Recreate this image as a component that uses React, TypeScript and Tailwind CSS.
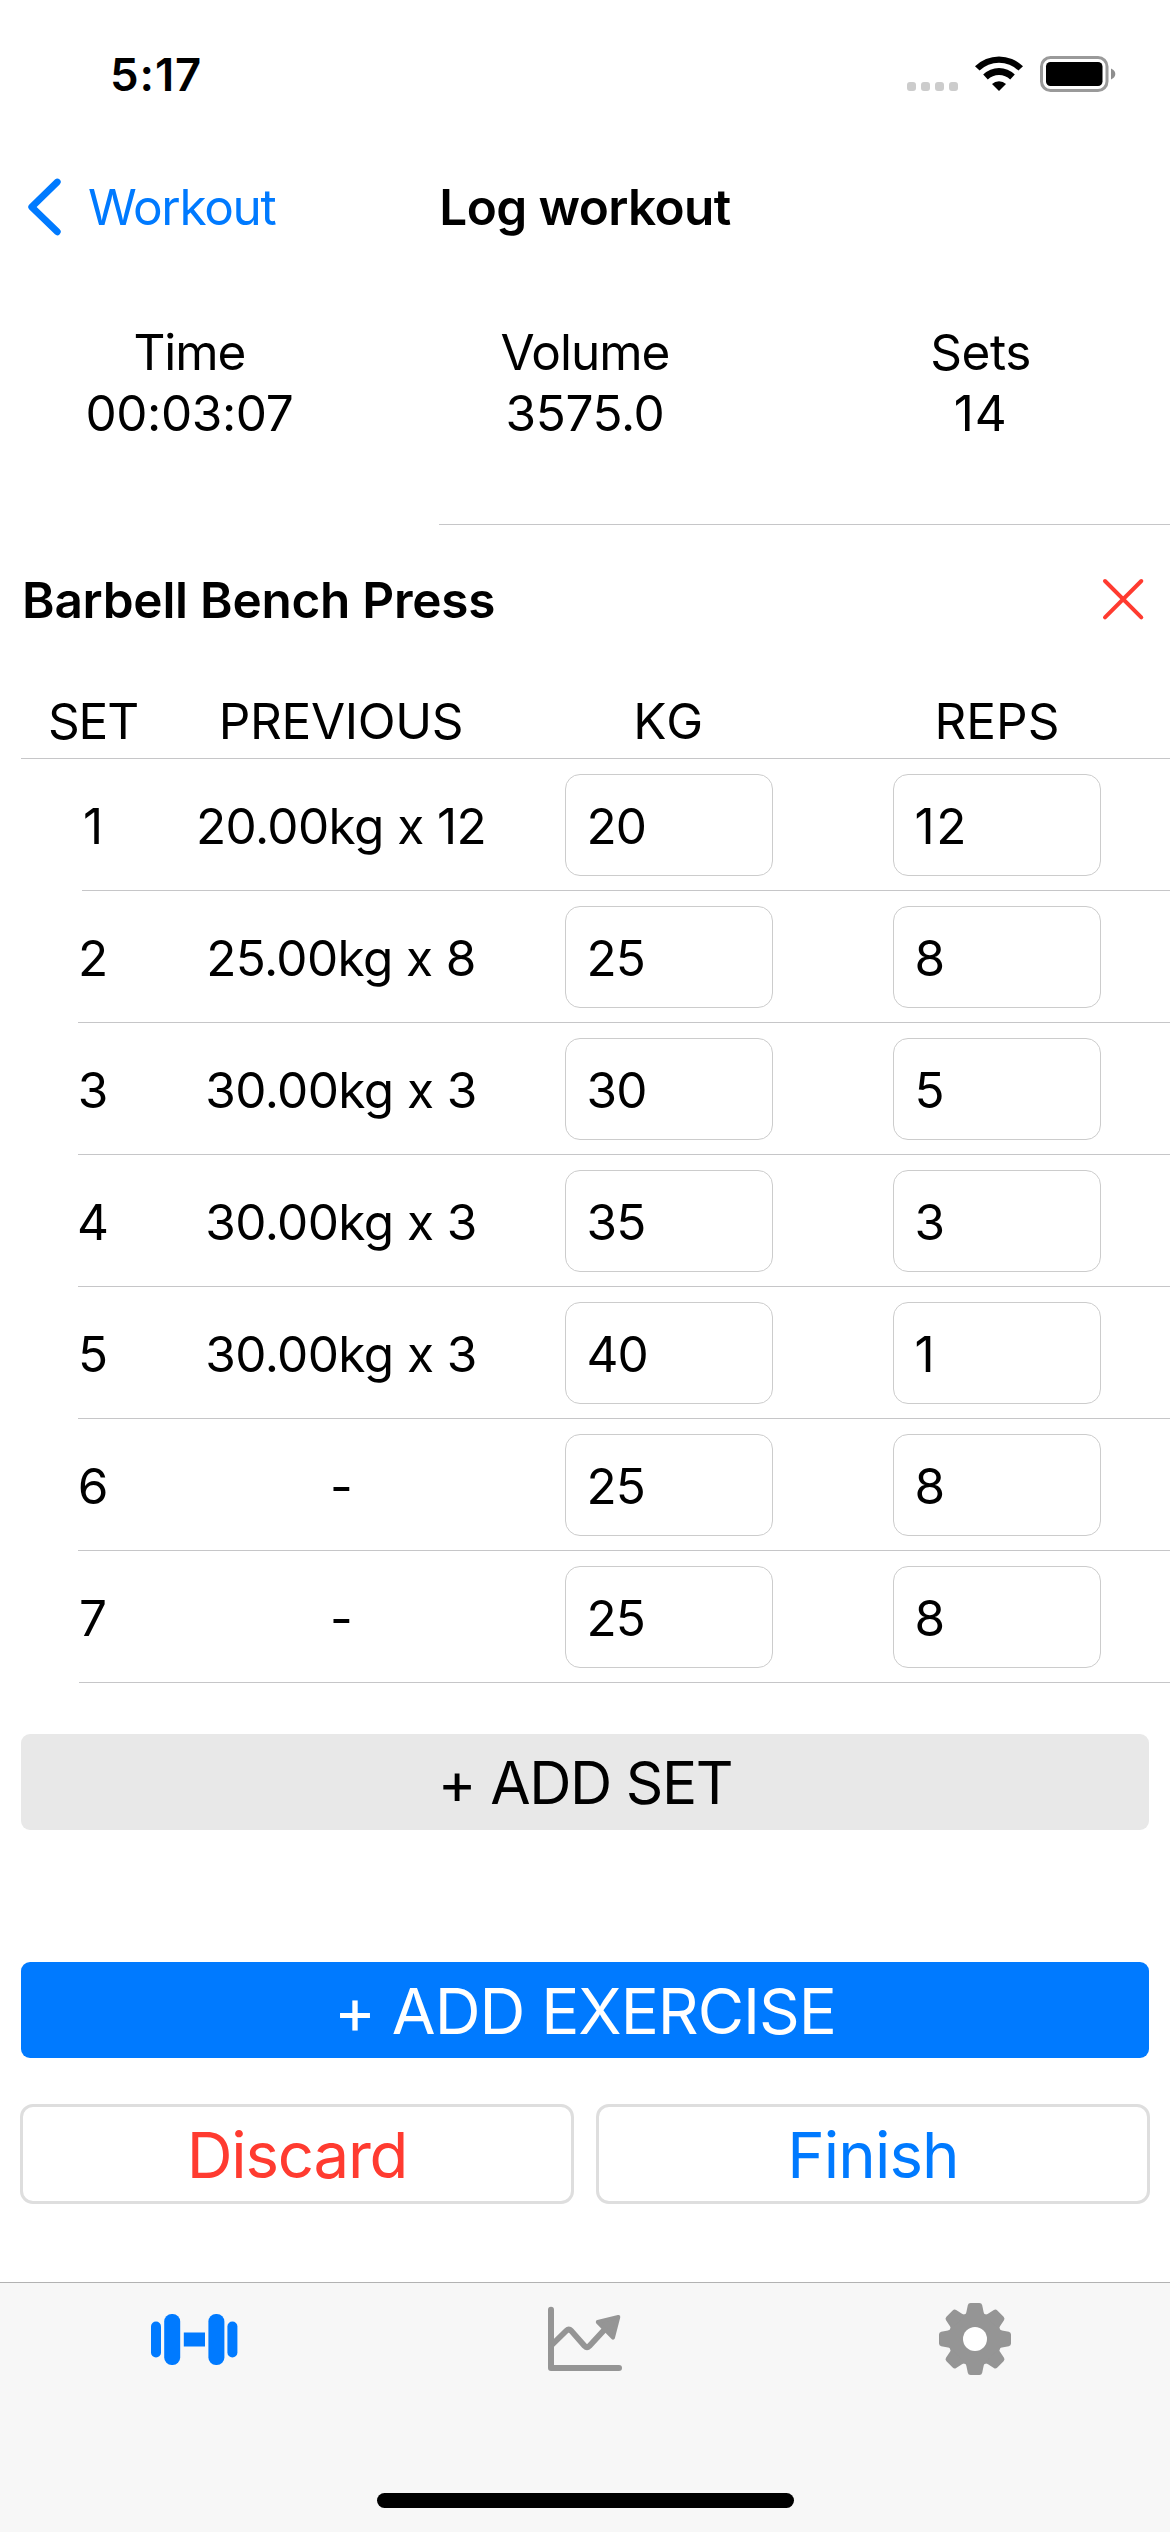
type SetRow = {
  n: string;
  previous: string;
  kg: string;
  reps: string;
  inset: string;
};

const rows: SetRow[] = [
  { n: "1", previous: "20.00kg x 12", kg: "20", reps: "12", inset: "ml-[82px]" },
  { n: "2", previous: "25.00kg x 8", kg: "25", reps: "8", inset: "ml-[78px]" },
  { n: "3", previous: "30.00kg x 3", kg: "30", reps: "5", inset: "ml-[78px]" },
  { n: "4", previous: "30.00kg x 3", kg: "35", reps: "3", inset: "ml-[78px]" },
  { n: "5", previous: "30.00kg x 3", kg: "40", reps: "1", inset: "ml-[78px]" },
  { n: "6", previous: "-", kg: "25", reps: "8", inset: "ml-[78px]" },
  { n: "7", previous: "-", kg: "25", reps: "8", inset: "ml-[79px]" },
];

const teeth = [0, 45, 90, 135, 180, 225, 270, 315];

function StatusBar() {
  return (
    <div className="flex h-[141px] items-start justify-between pl-[110px] pr-[54px]">
      <div className="pt-[47px] text-[45.5px] leading-[55px] font-semibold tracking-[0.9px]">5:17</div>
      <svg className="mt-[54px] h-[40px] w-[210px]" viewBox="906 54 210 40" fill="none">
        <g fill="#cccccc">
          <rect x="907" y="82" width="9" height="9" rx="3" />
          <rect x="921" y="82" width="9" height="9" rx="3" />
          <rect x="935" y="82" width="9" height="9" rx="3" />
          <rect x="949" y="82" width="9" height="9" rx="3" />
        </g>
        <g fill="#000">
          <path d="M975 66.3A34 34 0 0 1 1023 66.3L1018.4 70.6A28 28 0 0 0 979.6 70.6Z" />
          <path d="M983.2 74.6A22.5 22.5 0 0 1 1014.8 74.6L1010.2 79.6A16 16 0 0 0 987.8 79.6Z" />
          <path d="M992 84A10 10 0 0 1 1006 84L999 91Z" />
          <rect x="1046" y="62" width="56.5" height="24" rx="4.5" />
        </g>
        <rect x="1041.5" y="57.5" width="65.5" height="33" rx="9" stroke="#9a9a9a" strokeWidth="3" />
        <path d="M1111 68.5C1114.2 70 1115.3 72 1115.3 74S1114.2 78 1111 79.5Z" fill="#8e8e8e" />
      </svg>
    </div>
  );
}

function NavBar() {
  return (
    <div className="grid h-[132px] grid-cols-[1fr_auto_1fr] items-start">
      <button className="flex text-left text-[#007aff]">
        <svg className="mt-[36px] ml-[26px] h-[60px] w-[38px]" viewBox="26 177 38 60" fill="none">
          <path
            d="M57.3 182L31.7 207L57.3 231.8"
            stroke="currentColor"
            strokeWidth="6.8"
            strokeLinecap="round"
            strokeLinejoin="round"
          />
        </svg>
        <span className="ml-[24px] pt-[36px] tracking-[-1.3px]">Workout</span>
      </button>
      <h1 className="pt-[36px] font-semibold tracking-[-0.6px]">Log workout</h1>
      <div />
    </div>
  );
}

function Stat({ label, value, labelClass, valueClass }: { label: string; value: string; labelClass: string; valueClass: string }) {
  return (
    <div className="text-center leading-[61px]">
      <div className={labelClass}>{label}</div>
      <div className={valueClass}>{value}</div>
    </div>
  );
}

function Stats() {
  return (
    <>
      <div className="grid h-[251px] grid-cols-3 gap-x-[59px] px-[21px] pt-[49px]">
        <Stat label="Time" value="00:03:07" labelClass="tracking-[-1.1px]" valueClass="tracking-[-0.4px]" />
        <Stat label="Volume" value="3575.0" labelClass="tracking-[-1px]" valueClass="tracking-[-0.4px]" />
        <Stat label="Sets" value="14" labelClass="tracking-[-0.4px]" valueClass="tracking-[0.9px]" />
      </div>
      <div className="ml-[439px] h-px bg-[#c6c6c8]" />
    </>
  );
}

function Field({ value }: { value: string }) {
  return (
    <div
      className={`flex h-[102px] w-[208px] items-center rounded-[15px] border border-[#cccccc] pt-[2px] pl-[20.5px] ${
        value.startsWith("1") ? "tracking-[1.5px]" : "tracking-[-0.9px]"
      }`}
    >
      {value}
    </div>
  );
}

function SetTable() {
  return (
    <div>
      <div className="flex h-[67px] px-[21px] text-center">
        <div className="w-[144px] tracking-[-1.1px]">SET</div>
        <div className="w-[352px] tracking-[-0.35px]">PREVIOUS</div>
        <div className="w-[304px] tracking-[1.4px]">KG</div>
        <div className="ml-6 w-[304px]">REPS</div>
      </div>
      <div className="ml-[21px] h-px bg-[#c6c6c8]" />
      {rows.map((r) => (
        <div key={r.n}>
          <div className="flex h-[131px] px-[21px] pt-[15px] text-center">
            <div className="flex h-[102px] w-[144px] items-center justify-center pt-[2px]">{r.n}</div>
            <div className="flex h-[102px] w-[352px] items-center justify-center pt-[2px] tracking-[-0.6px]">
              {r.previous}
            </div>
            <div className="flex w-[304px] justify-center">
              <Field value={r.kg} />
            </div>
            <div className="ml-6 flex w-[304px] justify-center">
              <Field value={r.reps} />
            </div>
          </div>
          <div className={`h-px bg-[#c6c6c8] ${r.inset}`} />
        </div>
      ))}
    </div>
  );
}

function TabBar() {
  return (
    <div className="flex flex-1 flex-col border-t border-[#b2b2b2] bg-[#f7f7f7]">
      <div className="grid grid-cols-3 justify-items-center pt-[18px]">
        <svg className="h-[76px] w-[90px]" viewBox="150 2301 90 76" fill="#007aff">
          <rect x="151" y="2321.5" width="10" height="36" rx="5" />
          <rect x="164.2" y="2314" width="16" height="51" rx="7.5" />
          <rect x="183.8" y="2332.5" width="21.2" height="14" />
          <rect x="208.4" y="2314" width="16" height="51" rx="7.5" />
          <rect x="227.4" y="2321.5" width="10" height="36" rx="5" />
        </svg>
        <svg className="h-[76px] w-[90px]" viewBox="540 2301 90 76" fill="none" stroke="#959595" strokeLinecap="round" strokeLinejoin="round">
          <path d="M551 2309.7V2368H619" strokeWidth="6" />
          <path d="M551 2345.8L566.3 2330.8Q568.8 2328.4 571.3 2330.8L584.6 2346Q587 2348.4 589.4 2346L606 2328" strokeWidth="5.8" />
          <path d="M618.3 2317L597.8 2322L613 2337.6Z" fill="#959595" strokeWidth="4" />
        </svg>
        <svg className="h-[76px] w-[90px]" viewBox="-45 -38 90 76" fill="#959595">
          <circle r="26.6" />
          {teeth.map((a) => (
            <path
              key={a}
              transform={`rotate(${a})`}
              d="M-12 -23.5C-9.5 -24.5 -8.9 -25.5 -8.6 -27L-7.2 -33.8Q-6.7 -36 -4.4 -36H4.4Q6.7 -36 7.2 -33.8L8.6 -27C8.9 -25.5 9.5 -24.5 12 -23.5Z"
            />
          ))}
          <circle r="12" fill="#ffffff" />
        </svg>
      </div>
      <div className="mx-auto mt-auto mb-[24px] h-[15px] w-[417px] rounded-full bg-black" />
    </div>
  );
}

export default function App() {
  return (
    <div className="flex h-[2532px] w-[1170px] flex-col overflow-hidden bg-white font-['Inter',sans-serif] text-[49.5px] leading-[60px] text-black">
      <StatusBar />
      <NavBar />
      <Stats />
      <div className="flex h-[166px] items-start justify-between pt-[45px] pr-[25px] pl-[22px]">
        <h2 className="font-semibold tracking-[-0.25px]">Barbell Bench Press</h2>
        <svg className="mt-[7px] h-[44px] w-[44px]" viewBox="1101 577 44 44" fill="none">
          <path d="M1105 581L1141.3 617.3M1141.3 581L1105 617.3" stroke="#ff3b30" strokeWidth="4" strokeLinecap="round" />
        </svg>
      </div>
      <SetTable />
      <div className="px-[21px] pt-[51px] pb-[132px]">
        <button className="block h-[96px] w-full rounded-[9px] bg-[#e8e8e8] text-[58.5px] leading-[71px] tracking-[-1.4px]">
          + ADD SET
        </button>
      </div>
      <div className="px-[21px] text-[63.5px] leading-[77px] text-white">
        <button className="block h-[96px] w-full rounded-[9px] bg-[#007aff] tracking-[-1px]">+ ADD EXERCISE</button>
      </div>
      <div className="grid h-[224px] grid-cols-2 items-start gap-[22px] px-[20px] pt-[46px] text-[63.5px] leading-[77px]">
        <button className="h-[100px] rounded-[13px] border-[3px] border-[#dedede] tracking-[-1.2px] text-[#ff3b30]">
          Discard
        </button>
        <button className="h-[100px] rounded-[13px] border-[3px] border-[#dedede] tracking-[-0.9px] text-[#007aff]">
          Finish
        </button>
      </div>
      <TabBar />
    </div>
  );
}
